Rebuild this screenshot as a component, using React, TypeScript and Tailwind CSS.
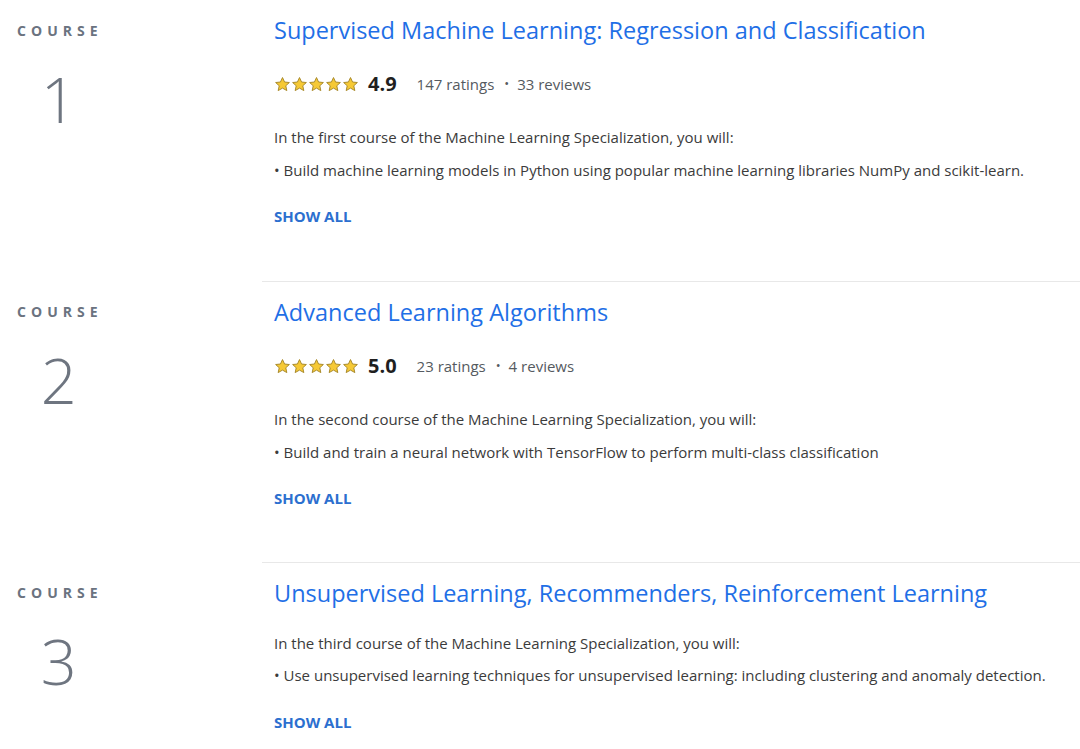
import React from 'react';

type Course = {
  n: number;
  title: string;
  rating?: { score: string; ratings: string; reviews: string };
  intro: string;
  bullet: string;
};

const COURSES: Course[] = [
  {
    n: 1,
    title: 'Supervised Machine Learning: Regression and Classification',
    rating: { score: '4.9', ratings: '147 ratings', reviews: '33 reviews' },
    intro: 'In the first course of the Machine Learning Specialization, you will:',
    bullet: '• Build machine learning models in Python using popular machine learning libraries NumPy and scikit-learn.',
  },
  {
    n: 2,
    title: 'Advanced Learning Algorithms',
    rating: { score: '5.0', ratings: '23 ratings', reviews: '4 reviews' },
    intro: 'In the second course of the Machine Learning Specialization, you will:',
    bullet: '• Build and train a neural network with TensorFlow to perform multi-class classification',
  },
  {
    n: 3,
    title: 'Unsupervised Learning, Recommenders, Reinforcement Learning',
    intro: 'In the third course of the Machine Learning Specialization, you will:',
    bullet: '• Use unsupervised learning techniques for unsupervised learning: including clustering and anomaly detection.',
  },
];

const Star = () => (
  <svg width="17" height="17" viewBox="0 0 24 24">
    <path
      d="M12 2.2l2.9 6.3 6.8.7-5.1 4.6 1.5 6.8L12 17.1l-6.1 3.5 1.5-6.8-5.1-4.6 6.8-.7z"
      fill="#f6c935"
      stroke="#a88a2c"
      strokeWidth="1.4"
      strokeLinejoin="round"
    />
  </svg>
);

const CourseRow: React.FC<{ c: Course; first: boolean }> = ({ c, first }) => (
  <div className="flex h-[281px]">
    {/* left: course number */}
    <div className="w-[262px] shrink-0 pl-[17px] pt-[18px]">
      <div className="inline-flex flex-col items-center">
        <div className="text-[14px] leading-[20px] font-bold tracking-[0.36em] mr-[-0.36em] text-[#6b7380]">COURSE</div>
        <div className="mt-[26px] ml-[3px] text-[63px] leading-none font-light text-[#6e7580]">{c.n}</div>
      </div>
    </div>

    {/* right: details */}
    <div className={`flex-1 pl-[12px] pt-[15px] ${first ? '' : 'border-t border-[#e8e8e8]'}`}>
      <div className="text-[23.5px] leading-[31px] text-[#1f6fe6]">{c.title}</div>

      {c.rating && (
        <div className="mt-[24px] h-[28px] flex items-center">
          <div className="flex">
            {[0, 1, 2, 3, 4].map((i) => <Star key={i} />)}
          </div>
          <span className="ml-[9px] text-[20px] font-bold text-[#1f1f1f]">{c.rating.score}</span>
          <span className="ml-[20px] text-[15px] text-[#555a60]">{c.rating.ratings}</span>
          <span className="ml-[10px] mr-[8px] text-[13px] text-[#555a60]">•</span>
          <span className="text-[15px] text-[#555a60]">{c.rating.reviews}</span>
        </div>
      )}

      <div className={`${c.rating ? 'mt-[27px]' : 'mt-[22px]'} text-[15px] leading-[24px] text-[#3b3b3b]`}>{c.intro}</div>
      <div className={`${c.rating ? 'mt-[9px]' : 'mt-[8px]'} text-[15px] leading-[24px] text-[#3b3b3b]`}>{c.bullet}</div>
      <div className={`${c.rating ? 'mt-[22px]' : 'mt-[23px]'} text-[15px] leading-[24px] font-bold text-[#2c6fcf]`}>SHOW ALL</div>
    </div>
  </div>
);

export default function App() {
  return (
    <div className="w-[1080px] h-[749px] overflow-hidden bg-white" style={{ fontFamily: '"Open Sans", "Noto Sans", sans-serif' }}>
      {COURSES.map((c, i) => (
        <CourseRow key={c.n} c={c} first={i === 0} />
      ))}
    </div>
  );
}
